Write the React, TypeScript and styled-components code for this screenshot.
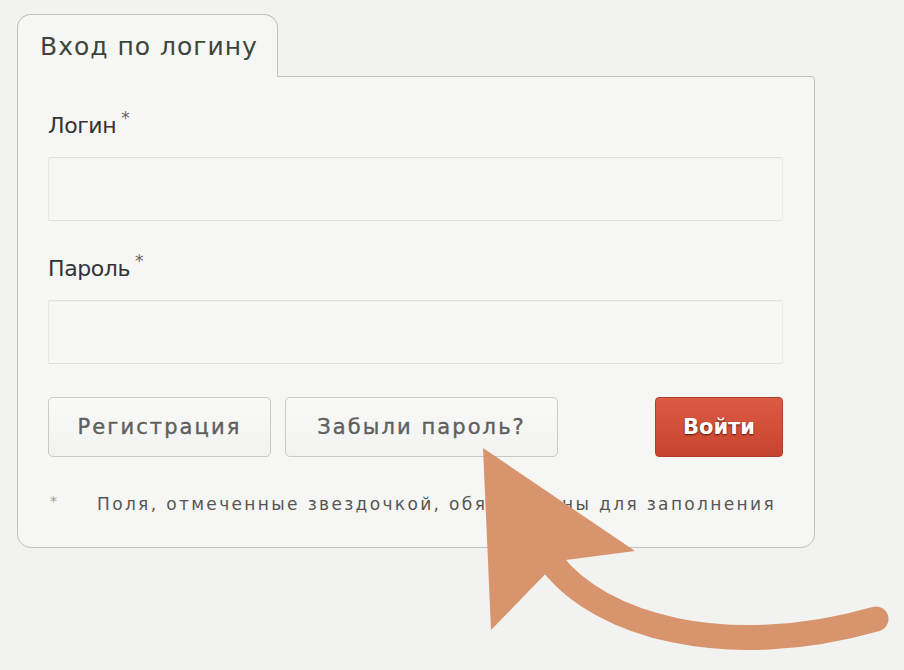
import React from 'react';
import styled, { createGlobalStyle } from 'styled-components';

const GlobalStyle = createGlobalStyle`
  html, body {
    margin: 0;
    padding: 0;
    background: #f2f2f0;
  }
  body {
    font-family: "DejaVu Sans", Verdana, sans-serif;
  }
  * {
    box-sizing: border-box;
  }
`;

interface FieldProps {
  label: string;
  type?: string;
}

function Field({ label, type = 'text' }: FieldProps) {
  return (
    <FieldWrapper>
      <LabelWrapper>
        {label}
        <StarWrapper>*</StarWrapper>
      </LabelWrapper>
      <InputWrapper type={type} />
    </FieldWrapper>
  );
}

function Arrow() {
  return (
    <ArrowWrapper viewBox='0 0 904 670' width='904' height='670'>
      <path
        d='M552 563 C600 625, 725 662, 876 619'
        fill='none'
        stroke='#d8946c'
        strokeWidth='25'
        strokeLinecap='round'
      />
      <polygon points='483,448 635,551 558,561 491,630' fill='#d8946c' />
    </ArrowWrapper>
  );
}

function App() {
  return (
    <>
      <GlobalStyle />
      <PageWrapper>
        <TabWrapper>Вход по логину</TabWrapper>
        <PanelWrapper>
          <Field label='Логин' />
          <Field label='Пароль' type='password' />
          <ButtonRow>
            <PlainButton $width={223}>Регистрация</PlainButton>
            <PlainButton $width={273}>Забыли пароль?</PlainButton>
            <SubmitButton>Войти</SubmitButton>
          </ButtonRow>
          <NoteWrapper>
            <NoteStar>*</NoteStar>
            Поля, отмеченные звездочкой, обязательны для заполнения
          </NoteWrapper>
        </PanelWrapper>
        <Arrow />
      </PageWrapper>
    </>
  );
}

const PageWrapper = styled.div`
  position: relative;
  width: 904px;
  height: 670px;
  padding: 14px 0 0 17px;
  overflow: hidden;
`;

const TabWrapper = styled.div`
  position: relative;
  z-index: 1;
  width: 261px;
  height: 63px;
  margin-bottom: -1px;
  padding: 17px 0 0 22px;
  background: #f6f6f4;
  border: 1px solid #c2c2c0;
  border-bottom: none;
  border-radius: 14px 14px 0 0;
  color: #3b463b;
  font-size: 25px;
  line-height: 30px;
  letter-spacing: 1px;
`;

const PanelWrapper = styled.div`
  width: 798px;
  padding: 35px 31px 32px 30px;
  background: #f6f6f4;
  border: 1px solid #c2c2c0;
  border-radius: 0 4px 14px 14px;
`;

const FieldWrapper = styled.div`
  display: flex;
  flex-direction: column;
  gap: 16px;
  margin-bottom: 34px;
`;

const LabelWrapper = styled.div`
  color: #333333;
  font-size: 22px;
  line-height: 27px;
  letter-spacing: -0.4px;
`;

const StarWrapper = styled.span`
  position: relative;
  top: -9px;
  margin-left: 5px;
  color: #666666;
  font-size: 17px;
`;

const InputWrapper = styled.input`
  width: 100%;
  height: 64px;
  margin: 0;
  padding: 0 12px;
  background: #f7f7f5;
  border: 1px solid #e0e0de;
  border-left-color: #e6e6e4;
  border-right-color: #ececea;
  border-radius: 2px;
  box-shadow: inset 0 1px 2px rgba(0, 0, 0, 0.03);
  outline: none;
`;

const ButtonRow = styled.div`
  display: flex;
  align-items: center;
  gap: 14px;
  margin-top: -1px;
`;

const PlainButton = styled.button<{ $width: number }>`
  width: ${(p) => p.$width}px;
  height: 60px;
  padding: 0;
  background: linear-gradient(#f9f9f7, #f2f2f0);
  border: 1px solid #c9c9c7;
  border-radius: 5px;
  color: #5f5f5d;
  font-family: "DejaVu Sans", Verdana, sans-serif;
  font-size: 21px;
  letter-spacing: 2.1px;
  -webkit-text-stroke: 0.4px #5f5f5d;
  text-shadow: 0 1px 0 #ffffff;
`;

const SubmitButton = styled.button`
  width: 128px;
  height: 60px;
  margin-left: auto;
  padding: 0;
  background: linear-gradient(#dc5b45, #c8432f);
  border: 1px solid #b23c2a;
  border-radius: 4px;
  color: #ffffff;
  font-family: "DejaVu Sans", Verdana, sans-serif;
  font-size: 21px;
  font-weight: bold;
  text-shadow: 0 1px 2px rgba(70, 10, 0, 0.9);
`;

const NoteWrapper = styled.div`
  margin-top: 33px;
  padding-left: 2px;
  color: #555555;
  font-size: 17px;
  line-height: 22px;
  letter-spacing: 2.35px;
  white-space: nowrap;
`;

const NoteStar = styled.span`
  display: inline-block;
  width: 47px;
  color: #999999;
  font-size: 14px;
  vertical-align: 4px;
`;

const ArrowWrapper = styled.svg`
  position: absolute;
  left: 0;
  top: 0;
  pointer-events: none;
`;

export default App;
